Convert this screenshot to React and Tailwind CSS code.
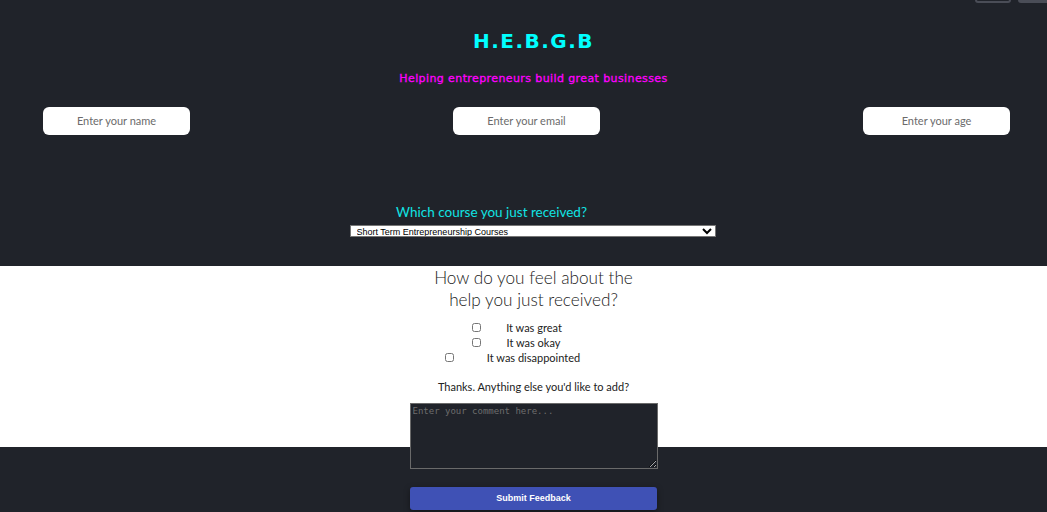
export default function App() {
  const options = ["It was great", "It was okay", "It was disappointed"];

  return (
    <div className="relative min-h-[512px] w-full bg-[#20232a] overflow-hidden font-['Lato','Open_Sans',sans-serif]">
      {/* header remnants scrolled off the top */}
      <div className="absolute right-0 top-[-20px] flex gap-[7px]">
        <div className="h-[23px] w-[36px] rounded-[3px] border-2 border-[#4a4d57]" />
        <div className="h-[23px] w-[29px] rounded-l-[3px] bg-[#4a4d57]" />
      </div>

      {/* top section */}
      <section className="flex flex-col items-center pt-[28px]">
        <h1 className="ml-[20px] font-['DejaVu_Sans',sans-serif] text-[20px] font-bold tracking-[1.5px] text-[#00ffff] leading-[26px]">
          H.E.B.G.B
        </h1>
        <p className="ml-[20px] mt-[17px] font-['DejaVu_Sans',sans-serif] text-[11px] tracking-[0.4px] text-[#ff00ff] [-webkit-text-stroke:0.3px_#ff00ff]">
          Helping entrepreneurs build great businesses
        </p>
        <div className="mt-[19px] flex w-full justify-between pl-[43px] pr-[37px]">
          {["Enter your name", "Enter your email", "Enter your age"].map((p) => (
            <input
              key={p}
              placeholder={p}
              className="h-[28px] w-[147px] rounded-[6px] bg-white text-center text-[11px] text-black outline-none placeholder:text-[#6b6b6b]"
            />
          ))}
        </div>
        <p className="-ml-[64px] mt-[67px] text-[13.5px] text-[#11e4e4] leading-[20px]">Which course you just received?</p>
        <select className="ml-[18px] mt-[3px] h-[12px] w-[366px] border border-[#767676] bg-white px-[2px] text-[9px] leading-[10px] text-black font-['Liberation_Sans',Arial,sans-serif]">
          <option>Short Term Entrepreneurship Courses</option>
          <option>Long Term Entrepreneurship Courses</option>
        </select>
      </section>

      {/* feedback section */}
      <section className="mt-[29px] flex h-[181px] flex-col items-center bg-white">
        <h2 className="ml-[20px] mt-[1px] w-[205px] text-center text-[17.2px] font-light leading-[22px] text-[#222]">
          How do you feel about the help you just received?
        </h2>
        <div className="mt-[10px] flex flex-col items-center gap-[2px]">
          {options.map((o, i) => (
            <label
              key={o}
              className={`flex items-center text-[11px] leading-[13px] text-[#222] ${i === 2 ? "gap-[33px] -ml-[22px]" : i === 1 ? "gap-[26px] -ml-[15px]" : "gap-[25px] -ml-[13px]"}`}
            >
              <input type="checkbox" className="h-[9px] w-[9px]" />
              {o}
            </label>
          ))}
        </div>
        <p className="ml-[20px] mt-[15px] text-[11px] text-[#222]">Thanks. Anything else you'd like to add?</p>
        <textarea
          placeholder="Enter your comment here..."
          className="ml-[20px] mt-[8px] h-[66px] w-[248px] shrink-0 border border-[#6a6a6a] bg-[#20232a] px-[2px] py-[1px] font-['DejaVu_Sans_Mono',monospace] text-[9px] text-white outline-none placeholder:text-[#6e6e6e]"
        />
        <button className="ml-[20px] mt-[18px] h-[23px] w-[247px] shrink-0 rounded-[3px] bg-[#3f51b5] font-['Liberation_Sans',Arial,sans-serif] text-[9px] font-bold text-white shadow-[0_2px_6px_rgba(0,0,0,0.4)]">
          Submit Feedback
        </button>
      </section>
    </div>
  );
}
